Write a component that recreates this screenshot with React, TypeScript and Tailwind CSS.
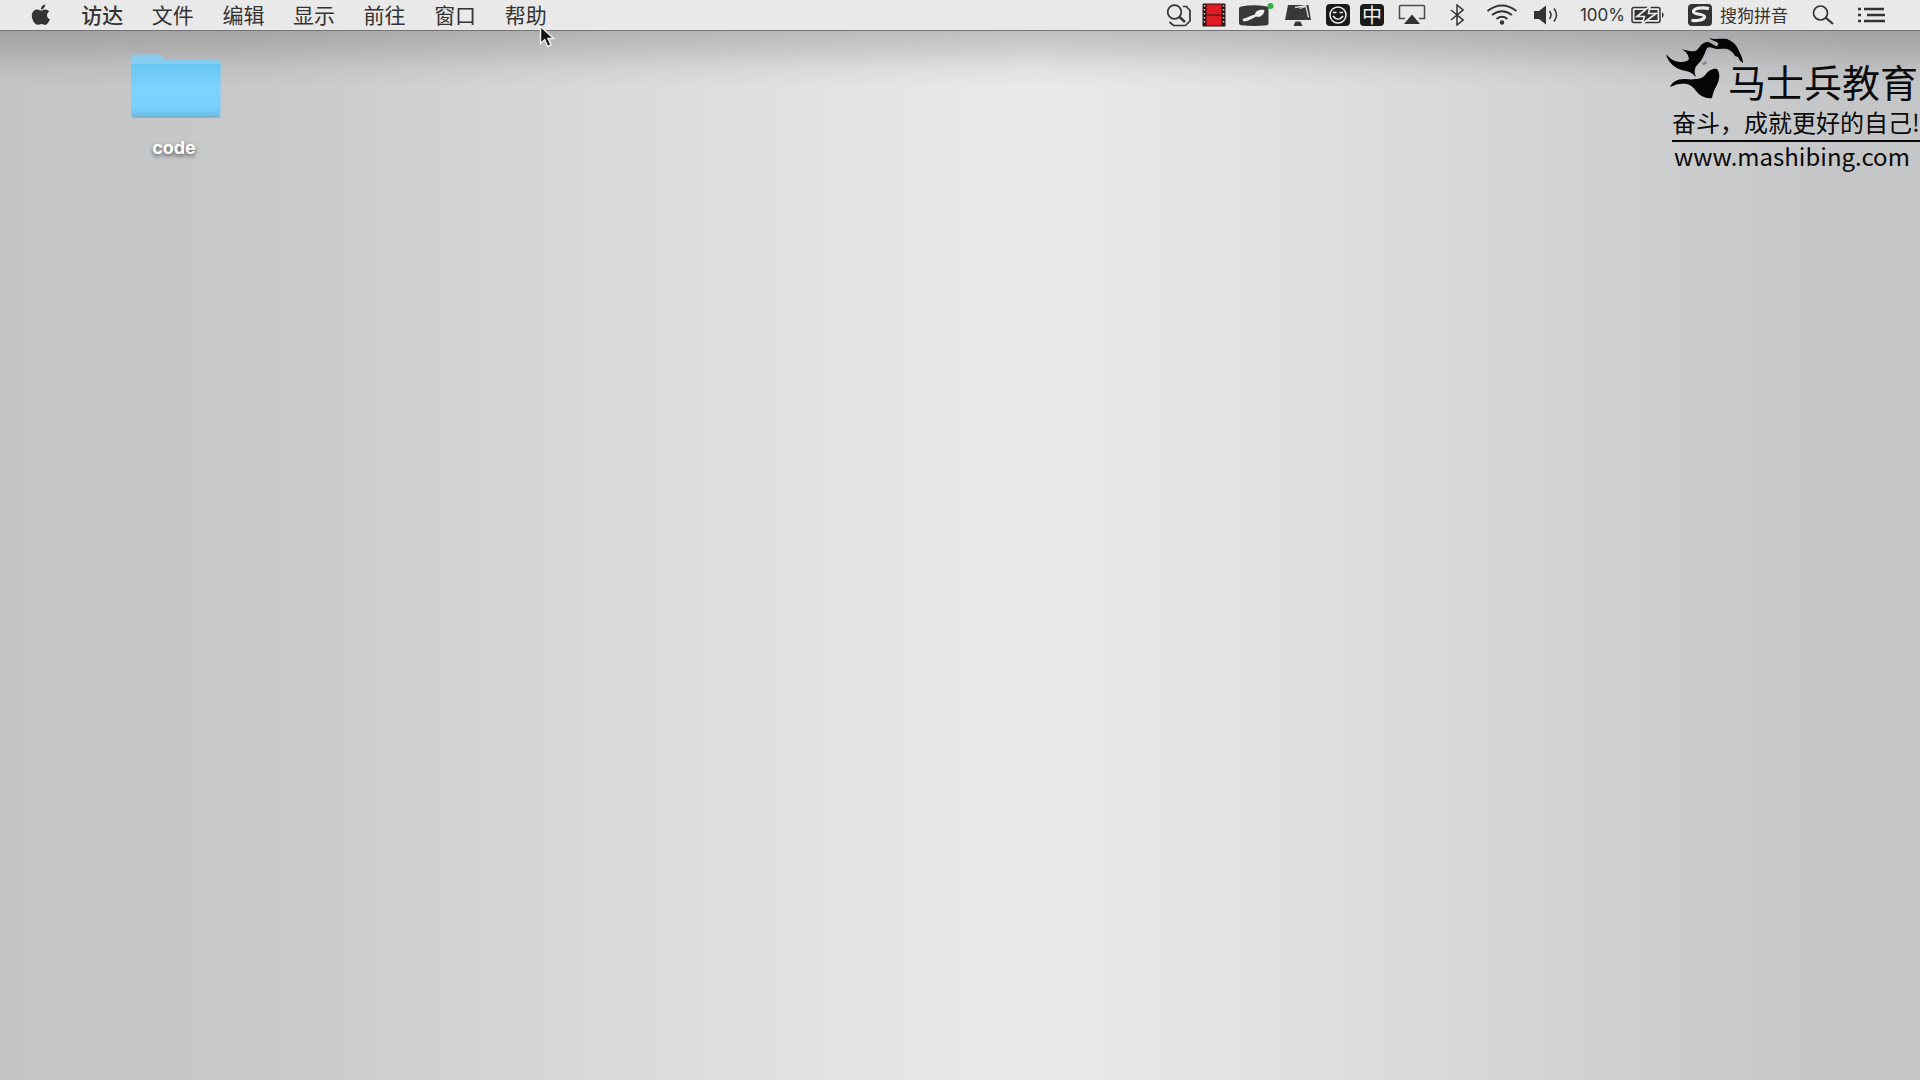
import type { ReactNode } from "react";

const menus = ["访达", "文件", "编辑", "显示", "前往", "窗口", "帮助"];

function AppleIcon() {
  return (
    <svg width="20" height="22" viewBox="0 0 20 22" fill="#333333">
      <path d="M14.2 0.6c.2 2.500-2 4.900-4.300 4.800C9.700 3.100 11.800 1 14.200.6z" />
      <path d="M10.200 6.600c1-.1 2.200-1.200 4.100-1.200 1.500 0 3 .8 3.900 2-3.300 2-2.700 6.500.7 7.800-.7 2-2.500 5.500-4.500 5.600-1.500 0-2-.9-3.900-.9s-2.400.9-3.800.9C4.100 20.800.8 16 .8 12c0-4 2.500-6.500 5.200-6.500 1.800 0 3.100 1.100 4.200 1.100z" />
    </svg>
  );
}

function SearchCardIcon() {
  return (
    <svg width="26" height="24" viewBox="0 0 26 24" fill="none" stroke="#333333">
      <circle cx="8.500" cy="9" r="6.800" strokeWidth="1.700" />
      <path d="M13.500 14l5.500 5" strokeWidth="2.400" />
      <path d="M17 3.500h3.500l3.500 4V18l-4.500 4.500H7.500L3.500 19" strokeWidth="1.700" />
    </svg>
  );
}

function FilmIcon() {
  return (
    <svg width="24" height="24" viewBox="0 0 24 24">
      <rect x="0.500" y="0.500" width="23" height="23" rx="1" fill="#2a1515" />
      <rect x="4.500" y="1.500" width="15" height="10" fill="#e01b24" />
      <rect x="4.500" y="12.500" width="15" height="10" fill="#e01b24" />
      <path d="M2.500 2v20M21.500 2v20" stroke="#cccccc" strokeWidth="1.500" strokeDasharray="1.500 2.500" />
    </svg>
  );
}

function BrushIcon() {
  return (
    <svg width="36" height="24" viewBox="0 0 36 24">
      <path d="M3 3.500Q16 1 29 3.500q1.500.3 1.500 2V20q0 2-1.500 2.200-13 1.500-26 0Q1 22 1 20V5.500q0-1.700 2-2z" fill="#383838" />
      <path d="M4.500 16c4.500-1 8-3.500 12.500-4.500 0-3 4-5.500 9.500-4.500-.5 5-4.500 8-8.500 6.500-4 2-8 5-12.500 5z" fill="#eeeeee" />
      <circle cx="32.500" cy="3" r="3" fill="#33ac45" />
    </svg>
  );
}

function MonitorIcon() {
  return (
    <svg width="28" height="24" viewBox="0 0 28 24">
      <path d="M4 2h20.500L27 17H1z" fill="#383838" />
      <path d="M11.500 18.500h5l2 4.500h-9z" fill="#383838" />
      <path d="M11 4.500L22.500 2.500M15.500 5.500l6.500-2 2.500 11" fill="none" stroke="#dddddd" strokeWidth="1.300" />
    </svg>
  );
}

function SmileIcon() {
  return (
    <svg width="24" height="24" viewBox="0 0 24 24" fill="none" stroke="#eeeeee">
      <rect x="0" y="1" width="24" height="22" rx="4" fill="#1a1a1a" stroke="none" />
      <circle cx="12" cy="12" r="8" strokeWidth="1.500" />
      <path d="M7 9.500h3.500M13.500 9.500H17M7 13q5 6.500 10 0" strokeWidth="1.700" />
    </svg>
  );
}

function AirPlayIcon() {
  return (
    <svg width="28" height="22" viewBox="0 0 28 22">
      <path d="M7 14.500H1.500v-12q0-1 1-1h23q1 0 1 1v12H21" fill="none" stroke="#4a4a4a" strokeWidth="1.500" />
      <path d="M14 10.500l8 9.500H6z" fill="#333333" />
    </svg>
  );
}

function BluetoothIcon() {
  return (
    <svg width="14" height="22" viewBox="0 0 14 22" fill="none" stroke="#333333" strokeWidth="1.500">
      <path d="M1 6l12 10-6 5V1l6 5L1 16" />
    </svg>
  );
}

function WifiIcon() {
  return (
    <svg width="32" height="22" viewBox="0 0 32 22" fill="none" stroke="#333333" strokeWidth="1.800">
      <path d="M1.500 7q14.500-11 29 0M6 11q10-7.500 20 0M10.500 15q5.500-4.500 11 0" />
      <circle cx="16" cy="18.500" r="2.200" fill="#333333" stroke="none" />
    </svg>
  );
}

function SpeakerIcon() {
  return (
    <svg width="26" height="20" viewBox="0 0 26 20" fill="none" stroke="#333333" strokeWidth="1.500">
      <path d="M0 6h5l7-5.500v19L5 14H0z" fill="#333333" stroke="none" />
      <path d="M15.500 6q3 4 0 8M20 3.500q5 6.500 0 13" />
    </svg>
  );
}

function BatteryIcon() {
  return (
    <svg width="35" height="18" viewBox="0 0 35 18">
      <rect x="1" y="1.500" width="28" height="15" rx="2" fill="none" stroke="#333333" strokeWidth="1.500" />
      <rect x="3.500" y="4" width="23" height="10" fill="#333333" />
      <path d="M31 6q3.500 3 0 6z" fill="#333333" />
      <path d="M19 0L6 10.500h7.500L11 18 25 7.500h-7.500z" fill="#333333" stroke="#e9e9e9" strokeWidth="1.700" />
    </svg>
  );
}

function SogouIcon() {
  return (
    <svg width="24" height="22" viewBox="0 0 24 22">
      <rect width="24" height="22" rx="4" fill="#333333" />
      <path d="M21 4.500C14 3 6 4 5.500 7.500 5 11 17 9.500 16.500 13c-.5 3-7 4-13 3.500" fill="none" stroke="#eeeeee" strokeWidth="3.200" />
    </svg>
  );
}

function SearchIcon() {
  return (
    <svg width="22" height="20" viewBox="0 0 22 20" fill="none" stroke="#333333">
      <circle cx="8.500" cy="8" r="7" strokeWidth="1.700" />
      <path d="M13.500 12.500l7.500 6.500" strokeWidth="2.200" />
    </svg>
  );
}

function ListIcon() {
  return (
    <svg width="28" height="16" viewBox="0 0 28 16" stroke="#333333" strokeWidth="2.500">
      <path d="M0 2h3M0 8h3M0 14h3M6 2h20M9 8h18M6 14h21" />
    </svg>
  );
}

function FolderIcon() {
  return (
    <svg width="90" height="64" viewBox="0 0 90 64">
      <defs>
        <linearGradient id="folder" x1="0" y1="0" x2="0" y2="1">
          <stop offset="0" stopColor="#69c5f2" />
          <stop offset="0.500" stopColor="#7dd3fd" />
          <stop offset="0.850" stopColor="#78cffa" />
          <stop offset="1" stopColor="#68bce8" />
        </linearGradient>
      </defs>
      <path d="M0 3q0-2.500 2.500-2.500H28q2 0 3 2.500l2 3h54q2.500 0 2.500 2.500V20H0z" fill="#87ceee" />
      <path d="M0 10h89.500v50q0 2.500-2.500 2.500H2.500Q0 62.500 0 60z" fill="url(#folder)" />
      <path d="M1 63h88" stroke="#5f9fbf" strokeWidth="1" />
    </svg>
  );
}

function HorseLogo() {
  return (
    <svg width="78" height="62" viewBox="0 0 78 62" fill="#050505">
      <path d="M0 16c4 5 9 8 15 8 4 0 7-1 8-3-1-5-3-8-8-10 5 1 10 3 14 2 4-1 4-6 9-8 3-2 6-1 8 1l6 3-1 2c-4-1-8-3-10-1-2 4-3 8-5 11-2 4-6 6-7 10-1 3 0 5 1 8-3-3-5-5-10-6C8 31 2 24 0 16z" />
      <path d="M43 0c6 2 11 0 18 1 7 3 10 7 12 12 2 4 4 8 4 12-2-1-4-3-5-6l-3-1c-1-3-5-6-8-7-5-1-8 1-13-1 3-2 5-3 4-5-2-2-6-2-9-5z" />
      <path d="M4 49c2-5 7-8 14-8 4 0 7 1 11 0 5 0 9-2 11-5 2-3 7-6 11-5 4 5 2 12 0 16-3 5-4 8-5 13-6 1-12-2-16-7-3-4-5-6-9-7-6-1-11 0-17 3z" />
      <path d="M36 25l4-2 1 3-4 1z" opacity="0.300" />
    </svg>
  );
}

function StatusButton({ label, className, children }: { label: string; className: string; children: ReactNode }) {
  return (
    <button type="button" aria-label={label} className={`shrink-0 ${className}`}>
      {children}
    </button>
  );
}

function MenuBar() {
  return (
    <header className="flex h-[30px] items-center justify-between bg-[#e9e9e9] pl-[31px] pr-[34px] text-[#333333] shadow-[0_1px_0_#8c8c8c]">
      <nav className="flex items-center">
        <button type="button" aria-label="Apple">
          <AppleIcon />
        </button>
        <div className="ml-4 grid w-[494px] grid-cols-7 pb-0.5">
          {menus.map((menu, i) => (
            <button
              key={menu}
              type="button"
              className={`text-center text-[21px] leading-7 ${i === 0 ? "font-medium" : ""}`}
            >
              {menu}
            </button>
          ))}
        </div>
      </nav>

      <div className="flex items-center">
        <StatusButton label="放大镜" className="">
          <SearchCardIcon />
        </StatusButton>
        <StatusButton label="录屏" className="ml-2.5">
          <FilmIcon />
        </StatusButton>
        <StatusButton label="画笔" className="ml-3">
          <BrushIcon />
        </StatusButton>
        <StatusButton label="显示器" className="ml-2.5">
          <MonitorIcon />
        </StatusButton>
        <StatusButton label="表情" className="ml-3.5">
          <SmileIcon />
        </StatusButton>
        <StatusButton
          label="中文输入"
          className="ml-2.5 h-[22px] w-6 rounded bg-[#1a1a1a] text-center text-xl leading-[20px] text-[#eeeeee]"
        >
          中
        </StatusButton>
        <StatusButton label="隔空播放" className="ml-3.5">
          <AirPlayIcon />
        </StatusButton>
        <StatusButton label="蓝牙" className="ml-6">
          <BluetoothIcon />
        </StatusButton>
        <StatusButton label="无线网络" className="ml-[22px]">
          <WifiIcon />
        </StatusButton>
        <StatusButton label="音量" className="ml-4">
          <SpeakerIcon />
        </StatusButton>
        <button type="button" className="ml-5 flex items-center gap-1.5">
          <span className="font-['Inter','Noto_Sans_CJK_SC',sans-serif] text-[17px] leading-6">100%</span>
          <BatteryIcon />
        </button>
        <button type="button" className="ml-[22px] flex items-center gap-2">
          <SogouIcon />
          <span className="text-[17px] leading-6">搜狗拼音</span>
        </button>
        <StatusButton label="搜索" className="ml-6">
          <SearchIcon />
        </StatusButton>
        <StatusButton label="通知中心" className="ml-6">
          <ListIcon />
        </StatusButton>
      </div>
    </header>
  );
}

export default function App() {
  return (
    <div className="flex min-h-screen flex-col overflow-hidden bg-[linear-gradient(to_right,#c3c4c6_0%,#c8c9cb_14%,#d8d9db_31%,#e4e5e7_46%,#e9eaec_54%,#e2e3e5_64%,#d7d8da_76%,#cbccce_88%,#c4c5c7_97%)] font-['Noto_Sans_CJK_SC',sans-serif]">
      <MenuBar />

      <main className="flex grow items-start justify-between bg-[linear-gradient(to_bottom,rgba(0,0,0,0.18)_0px,rgba(0,0,0,0.12)_18px,rgba(0,0,0,0.04)_38px,transparent_58px)] pl-[131px]">
        {/* 桌面文件夹 */}
        <button type="button" className="mt-6 flex flex-col items-center gap-[18px]">
          <FolderIcon />
          <span className="pr-1 font-['Inter',sans-serif] text-lg leading-6 font-bold text-white [text-shadow:0_2px_4px_rgba(0,0,0,0.6)]">
            code
          </span>
        </button>

        {/* 水印 */}
        <div className="mt-2 w-[254px] text-[#0a0a0a]">
          <div className="flex whitespace-nowrap">
            <HorseLogo />
            <span className="-ml-4 pt-5 text-[38px] leading-[46px]">马士兵教育</span>
          </div>
          <div className="ml-1.5 border-b-2 border-[#0a0a0a] text-2xl leading-9 whitespace-nowrap">
            奋斗，成就更好的自己!
          </div>
          <a href="http://www.mashibing.com" className="ml-2 block text-2xl leading-7">
            www.mashibing.com
          </a>
        </div>
      </main>

      {/* 鼠标指针 */}
      <svg width="18" height="24" viewBox="0 0 18 24" className="pointer-events-none absolute top-[25px] left-[539px]">
        <path
          d="M1.500 1.500v17l4.200-3.800 3 6.800 3.300-1.500-3-6.500h5.700z"
          fill="#111111"
          stroke="#eeeeee"
          strokeWidth="1.500"
        />
      </svg>
    </div>
  );
}
